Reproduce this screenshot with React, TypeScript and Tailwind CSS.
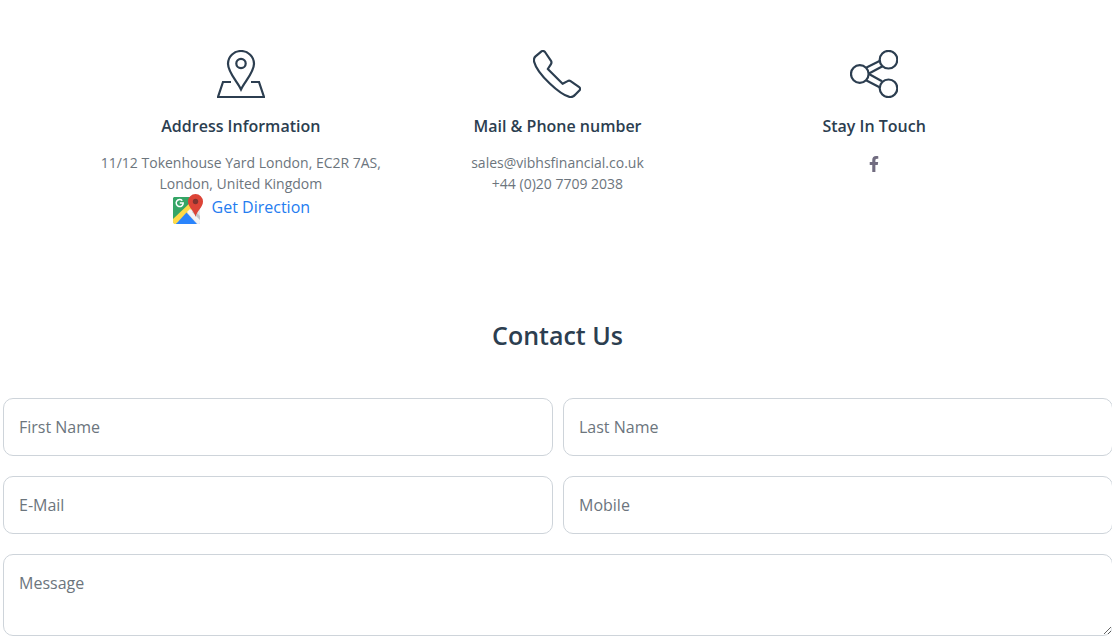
import type { ReactNode } from 'react'
import { FaFacebookF } from 'react-icons/fa'

// ─── Icons ────────────────────────────────────────────────────────────────────

const lineIcon = {
  width: 48,
  height: 48,
  viewBox: '0 0 48 48',
  fill: 'none',
  stroke: 'currentColor',
  strokeWidth: 2.2,
  'aria-hidden': true,
} as const

function MapPinIcon() {
  return (
    <svg {...lineIcon}>
      <path d="M24 39.5C20.5 32 11 22.500 11 13.800a13 12.800 0 0 1 26 0C37 22.500 27.500 32 24 39.500Z" />
      <circle cx="24" cy="13.500" r="4.700" />
      <path d="M14 32H6L1 47h46l-5-15h-8" />
    </svg>
  )
}

function PhoneIcon() {
  return (
    <svg {...lineIcon} strokeLinejoin="round">
      <path d="M8.500 1.300C9.800.700 11 .900 12 2l6 8.800c.700 1.200.500 2.500-.200 3.600l-3 4.600 14.800 14.800 5-2.700c1-.600 2-.600 3 .100l8.600 6c1.200.900 1.200 2 .400 3l-4.200 4.300c-1.500 2-3.300 3-6 2.400C27 44.500 4.500 24.500 1.200 12c-.700-2.500-.200-4.200 1.300-5.600Z" />
    </svg>
  )
}

function ShareIcon() {
  return (
    <svg {...lineIcon}>
      <path d="m16.500 17.500 14-7M18.500 23.800l14.500-7.800M18.500 23.800l13.500 7.500M16.500 30.500l13.500 7" />
      <circle cx="9.800" cy="24" r="8.800" />
      <circle cx="38.500" cy="9.700" r="8.800" fill="#fff" />
      <circle cx="38.500" cy="38.300" r="8.800" fill="#fff" />
    </svg>
  )
}

function GoogleMapsIcon() {
  return (
    <svg width="31" height="30" viewBox="0 0 31 30" aria-hidden="true">
      <path d="M2 3h20l6 6v19a2 2 0 0 1-2 2H3L1 28V4Z" fill="#35a566" />
      <path d="M28 9v21H15L2 29 22 8Z" fill="#e4e5e8" />
      <path d="M1 25 20 7l4 4L4 30H3a2 2 0 0 1-2-2Z" fill="#ffda48" />
      <path d="M4 30 14.500 18.500 25 30Z" fill="#2a84fc" />
      <path d="m15 18 3-3 10 10v3a2 2 0 0 1-2 2Z" fill="#f4f4f5" />
      <path d="m22 16 6 6v4l-8-8Z" fill="#c2c4c8" />
      <path d="M23.500 23C22.500 17 16 13.500 16 7.500a7.500 7.500 0 0 1 15 0c0 6-6.500 9.500-7.500 15.500Z" fill="#dc4437" />
      <circle cx="23.500" cy="7.500" r="2.700" fill="#80332f" />
      <path d="M10.300 6.700A3.500 3.500 0 1 0 11.200 9H7.800" fill="none" stroke="#fff" strokeWidth="1.500" />
    </svg>
  )
}

// ─── Info columns ─────────────────────────────────────────────────────────────

function InfoColumn({ icon, title, children }: { icon: ReactNode; title: string; children: ReactNode }) {
  return (
    <div className="flex flex-col items-center px-4 text-center">
      {icon}
      <h3 className="mt-4 mb-[14px] text-base leading-6 font-semibold">{title}</h3>
      <div className="text-sm leading-[21px] text-[#6c757d]">{children}</div>
    </div>
  )
}

// ─── Form ─────────────────────────────────────────────────────────────────────

const FIELDS = [
  { name: 'firstName', label: 'First Name', type: 'text' },
  { name: 'lastName', label: 'Last Name', type: 'text' },
  { name: 'email', label: 'E-Mail', type: 'email' },
  { name: 'mobile', label: 'Mobile', type: 'tel' },
]

const fieldClass =
  'block w-full rounded-[10px] border border-[#ced4da] bg-white px-[15px] py-4 text-base leading-6 placeholder:text-[#6c757d] placeholder:opacity-100 focus:outline-none focus:border-[#247cf0]'

export default function App() {
  return (
    <main className="overflow-hidden bg-white pt-[50px] pr-[2px] font-['Open_Sans',sans-serif] text-[#2c3e50]">
      <section className="mx-auto grid max-w-[950px] grid-cols-3">
        <InfoColumn icon={<MapPinIcon />} title="Address Information">
          <p>
            11/12 Tokenhouse Yard London, EC2R 7AS,
            <br />
            London, United Kingdom
          </p>
          <a href="#directions" className="flex items-center justify-center gap-[9px] text-base leading-6 text-[#247cf0]">
            <GoogleMapsIcon />
            <span className="mb-1">Get Direction</span>
          </a>
        </InfoColumn>
        <InfoColumn icon={<PhoneIcon />} title="Mail & Phone number">
          <a href="mailto:sales@vibhsfinancial.co.uk" className="block">
            sales@vibhsfinancial.co.uk
          </a>
          <a href="tel:+4402077092038" className="block">
            +44 (0)20 7709 2038
          </a>
        </InfoColumn>
        <InfoColumn icon={<ShareIcon />} title="Stay In Touch">
          <a href="#facebook" aria-label="Facebook" className="block pt-1 text-[#716c80]">
            <FaFacebookF size={16} />
          </a>
        </InfoColumn>
      </section>

      <section className="pt-24">
        <h2 className="text-center text-[25px] leading-[30px] font-semibold">Contact Us</h2>
        <div className="mt-12 mr-[3px] overflow-hidden pl-[3px]">
          <form className="-mr-px grid grid-cols-2 gap-x-[10px] gap-y-5">
            {FIELDS.map(f => (
              <input
                key={f.name}
                name={f.name}
                type={f.type}
                aria-label={f.label}
                placeholder={f.label}
                className={`${fieldClass} h-[58px]`}
              />
            ))}
            <textarea
              name="message"
              aria-label="Message"
              placeholder="Message"
              className={`${fieldClass} col-span-2 h-[82px] resize-y`}
            />
          </form>
        </div>
      </section>
    </main>
  )
}
